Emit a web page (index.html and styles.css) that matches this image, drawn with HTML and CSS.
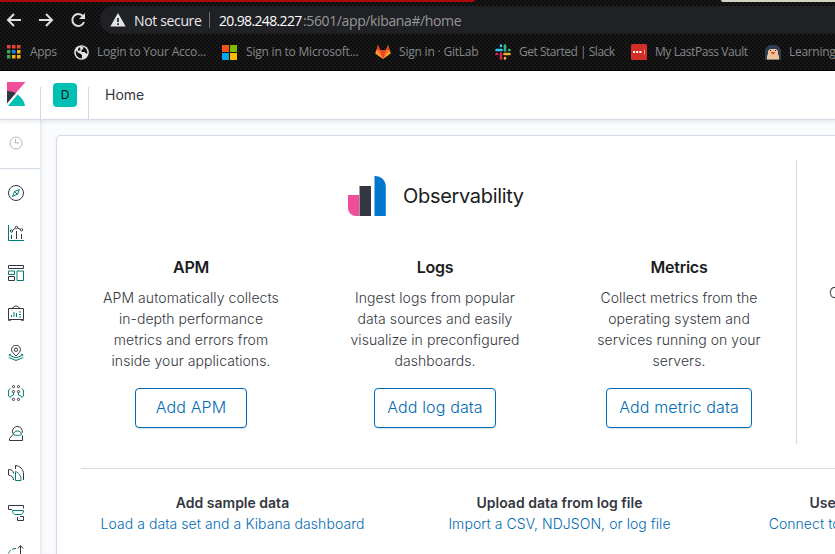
FILE: index.html
```html
<!DOCTYPE html>
<html lang="en">
<head>
<meta charset="utf-8">
<title>Home - Kibana</title>
<link rel="stylesheet" href="styles.css">
</head>
<body>
<div class="browser">
  <div class="tabs"><span class="tab-red"></span><span class="tab-light"></span></div>
  <div class="toolbar">
    <svg class="nav" width="16" height="16" viewBox="0 0 16 16"><path d="M15 8H2M8 2L2 8l6 6"/></svg>
    <svg class="nav" width="16" height="16" viewBox="0 0 16 16"><path d="M1 8h13M8 2l6 6-6 6"/></svg>
    <svg class="nav reload" width="16" height="16" viewBox="0 0 16 16"><path d="M13 4.2A6 6 0 1 0 14 10"/><path class="solid" d="M15 1v6H9z"/></svg>
    <div class="address">
      <svg width="16" height="14" viewBox="0 0 16 14"><path fill="#e3e4e5" d="M8 0l7.7 13.5H.3z"/><path stroke="#202124" stroke-width="1.7" d="M8 5v4M8 10.3V12"/></svg>
      <span class="secure">Not secure</span><i></i><span class="host">20.98.248.227</span><span class="path">:5601/app/kibana#/home</span>
    </div>
  </div>
  <div class="bookmarks">
    <div><svg width="14" height="14" viewBox="0 0 14 14"><path fill="#e84135" d="M0 0h3.5v3.5H0zM5 0h3.5v3.5H5zM10 0h3.5v3.5H10z"/><path fill="#39a853" d="M0 5h3.5v3.5H0zM0 10h3.5v3.5H0z"/><path fill="#1686f5" d="M5 5h3.5v3.5H5z"/><path fill="#f8b409" d="M10 5h3.5v3.5H10zM5 10h3.5v3.5H5zM10 10h3.5v3.5H10z"/></svg><span class="bm-apps">Apps</span></div>
    <div><svg width="15" height="15" viewBox="0 0 15 15"><circle cx="7.5" cy="7.5" r="7.3" fill="#e4e4e4"/><path fill="#141414" d="M2 5.5L4.5 8l2 .8L8 10v3.3C4 13.5 1 10 2 5.5zM6 2l3.6-.2L9 4 7.5 5v2h3l1.5 1.5h1.3c.3-2.5-.7-5-3-6.3L9.5 1.5zM6 2L4 4v2l2.5-1z"/></svg><span class="bm-login">Login to Your Acco...</span></div>
    <div><svg width="15" height="15" viewBox="0 0 15 15"><path fill="#f65314" d="M0 0h7v7H0z"/><path fill="#7fba00" d="M8 0h7v7H8z"/><path fill="#00a4ef" d="M0 8h7v7H0z"/><path fill="#ffb900" d="M8 8h7v7H8z"/></svg><span class="bm-ms">Sign in to Microsoft...</span></div>
    <div><svg width="16" height="16" viewBox="0 0 16 16"><path fill="#fc6d26" d="M3 1l2 5h6l2-5 2.5 8L8 15 .5 9z"/><path fill="#e24329" d="M5 6h6l-3 9zM3 1l2 5H1.5zM13 1l-2 5h3.5z"/><path fill="#fca326" d="M1.5 6L.3 9.5 8 15zM14.5 6l1.2 3.5L8 15z"/></svg><span class="bm-git">Sign in · GitLab</span></div>
    <div><svg class="slack" width="16" height="16" viewBox="0 0 16 16"><path stroke="#36c5f0" d="M1.5 6h5M6 1.5v.4"/><path stroke="#2eb67d" d="M10 1.5v5M14.1 6h.4"/><path stroke="#ecb22e" d="M9.5 10h5M10 14.1v.4"/><path stroke="#e01e5a" d="M6 9.5v5M1.5 10h.4"/></svg><span class="bm-slack">Get Started | Slack</span></div>
    <div><svg width="16" height="16" viewBox="0 0 16 16"><rect width="16" height="16" rx="1.5" fill="#d32d27"/><path fill="#fff" d="M2 7h2v2H2zM5.2 7h2v2h-2zM8.4 7h2v2h-2z"/><path fill="#f09a94" d="M13 5.5h1v5h-1z"/></svg><span class="bm-last">My LastPass Vault</span></div>
    <div><svg width="16" height="16" viewBox="0 0 16 16"><path fill="#2c3e50" d="M0 16V7c0-2 1-3 3-5l2-1h6l2 1c2 2 3 3 3 5v9z"/><path fill="#efc49b" d="M3 7l2-2h6l2 2v3l1 2v3.5H2V12l1-2z"/><path fill="#27303a" d="M5 6h1v1H5zM10 6h1v1h-1z"/><path fill="#d95827" d="M6 8h4v1L8 10.5 6 9z"/></svg><span class="bm-learn">Learning</span></div>
  </div>
</div>
<header class="header">
  <div class="logo"><svg width="19" height="24" viewBox="0 0 19 24"><path fill="#f04e98" d="M0 0h18.5L0 21z"/><path fill="#343741" d="M0 9c3.3 0 6.3.8 8.8 2L0 21.5z"/><path fill="#00bfb3" d="M10.5 12.6c4 2.7 6.8 6.7 7.6 11.4H1z"/></svg></div>
  <div class="space"><span>D</span></div>
  <div class="crumb">Home</div>
</header>
<div class="app">
  <nav class="side">
    <div class="recent"><svg width="14" height="14" viewBox="0 0 14 14" fill="none" stroke="#b7b9be"><circle cx="7" cy="7" r="6"/><path d="M6.5 3v4H10"/></svg></div>
    <div class="items">
      <svg viewBox="0 0 16 16"><circle cx="8" cy="8" r="7.5"/><path class="g" d="M11.5 4.5L9.5 9l-5 2.5 2-5zM6.5 6.5l3 3"/></svg>
      <svg viewBox="0 0 16 16"><path class="g" d="M.5 0v15.5H16"/><path d="M3.5 10v4M8.5 6v8M13.5 9v5M4.6 5.3L7.2 3.2M9.8 3l2.4 1.3"/><circle cx="3.5" cy="6" r="1.2"/><circle cx="8.5" cy="2.5" r="1.2"/><circle cx="13.5" cy="4.8" r="1.2"/></svg>
      <svg viewBox="0 0 16 16"><path d="M.5.5h15v3H.5zM.5 11.5h6v4h-6z"/><path class="g" d="M.5 6h6v3.5h-6zM9 6h6.5v9.5H9z"/></svg>
      <svg viewBox="0 0 16 16"><path d="M.5 3.5h15v11H.5zM4 3.5L7 1h2l3 2.5M0 15.2h3M13 15.2h3"/><path class="g" d="M3.5 10v2M6 7v5M8.5 8v4M11 7h2M11 9.5h2M11 12h2"/></svg>
      <svg viewBox="0 0 16 16"><path d="M8 11C5.5 8.4 3.5 6.5 3.5 4.7a4.5 4.5 0 0 1 9 0C12.5 6.5 10.5 8.4 8 11z"/><circle cx="8" cy="4.7" r="1.7"/><path class="g" d="M3 9L.8 10 8 13l7.2-3L13 9M.8 12.5l7.2 3 7.2-3"/></svg>
      <svg viewBox="0 0 16 16"><g><circle cx="5.5" cy="1.6" r="1.1"/><circle cx="10.5" cy="1.6" r="1.1"/><circle cx="5.5" cy="6.6" r="1.1"/><circle cx="10.5" cy="6.6" r="1.1"/><circle cx="5.5" cy="14.4" r="1.1"/><circle cx="10.5" cy="14.4" r="1.1"/></g><path class="g" d="M2.5 3.5L.6 5v6l2 2M5.5 8v2l-3 1.5M13.5 3.5L15.4 5v6l-2 2M10.5 8v2l3 1.5"/></svg>
      <svg viewBox="0 0 16 16"><path d="M4.8 8.5a5 5 0 1 1 9.4-.7M5 9.5l-3.5 4v2h13v-5"/><path class="g" d="M5.5 9.5c0-2 1.5-3.5 4-3.5s4 1.5 4 3.5c-2 1.2-6 1.2-8 0z"/></svg>
      <svg viewBox="0 0 16 16"><path d="M5.5 15C5.5 12.5 4 10.6.5 10V4.5c3 0 5 1.3 5 4M7.5 4V.5C12 1 15.5 4.3 15.5 9v6"/><path class="g" d="M7.5 6.5c3.5 1.2 5.5 4 5.5 9H7.5z"/></svg>
      <svg viewBox="0 0 16 16"><path d="M4 4.5H.5v-4h15v3M9.5 12v3.5h6v-4H12"/><path class="g" d="M4.5 5.5h11c0 3-1.5 4-3.5 4H8c-2 0-3.5-1-3.5-4z"/></svg>
      <svg viewBox="0 0 16 16"><path d="M12.5 16V1M9.8 3.5l2.7-3 2.7 3M8 13h1"/><path class="g" stroke-dasharray="4 1.5" d="M8 3.5C4 3.5.5 6 .5 10"/></svg>
    </div>
  </nav>
  <main>
    <section class="panel">
      <div class="solutions">
        <div class="observability">
          <div class="title"><svg width="38" height="40" viewBox="0 0 38 40"><path fill="#f04e98" d="M0 19h11v21H8a8 8 0 0 1-8-8z"/><path fill="#343741" d="M11.5 10H23v30H11.5z"/><path fill="#0077cc" d="M26.5 0c7 0 11.3 4.5 11.3 11v29H26.5z"/></svg><h2>Observability</h2></div>
          <div class="cards">
            <article><h3>APM</h3><p>APM automatically collects<br>in-depth performance<br>metrics and errors from<br>inside your applications.</p><button>Add APM</button></article>
            <article><h3>Logs</h3><p>Ingest logs from popular<br>data sources and easily<br>visualize in preconfigured<br>dashboards.</p><button>Add log data</button></article>
            <article><h3>Metrics</h3><p>Collect metrics from the<br>operating system and<br>services running on your<br>servers.</p><button>Add metric data</button></article>
          </div>
        </div>
        <div class="security"><p>Centralize security events</p></div>
      </div>
      <div class="data">
        <div><b>Add sample data</b><a>Load a data set and a Kibana dashboard</a></div>
        <div><b>Upload data from log file</b><a>Import a CSV, NDJSON, or log file</a></div>
        <div><b>Use Elasticsearch data</b><a>Connect to your Elasticsearch index</a></div>
      </div>
    </section>
  </main>
</div>
</body>
</html>
```
FILE: styles.css
```css
* { box-sizing: border-box; }
body { margin: 0; width: 835px; height: 554px; overflow: hidden; display: flex; flex-direction: column; background: #fff; font-family: Inter, "Liberation Sans", sans-serif; color: #343741; }
svg { flex: none; display: block; }
h2, h3, p { margin: 0; }

.browser { height: 71px; flex: none; overflow: hidden; border-bottom: 1px solid #000; background: repeating-conic-gradient(#0c0c0c 0 25%, #191919 0 50%) 0 0 / 4px 4px; font-family: "Open Sans", "Noto Sans", sans-serif; }
.tabs { height: 2px; display: flex; justify-content: space-between; }
.tab-red { width: 475px; background: #ad0909; border-radius: 0 0 4px 0; }
.tab-light { width: 114px; background: #d3d2c2; border-radius: 0 0 0 4px; }
.toolbar { display: flex; align-items: center; padding-left: 6px; height: 36px; }
.nav { fill: none; stroke: #dedfe0; stroke-width: 2; margin-right: 16px; }
.nav .solid { fill: #dedfe0; stroke: none; }
.reload { margin-right: 14px; }
.address { width: 760px; flex: none; height: 28px; border-radius: 14px; background: #202124; display: flex; align-items: center; padding-left: 10px; font-size: 14px; white-space: nowrap; }
.secure { color: #e8eaed; margin-left: 8px; width: 67px; letter-spacing: -.35px; }
.address i { width: 1px; height: 16px; background: #6b6d70; margin: 0 9px 0 8px; }
.host { color: #fff; width: 84px; letter-spacing: -.65px; }
.path { color: #969799; letter-spacing: -.38px; }
.bookmarks { display: grid; grid-template-columns: 67px 148px 153px 120px 136px 134px 140px; padding-left: 7px; height: 28px; font-size: 12px; color: #85878a; white-space: nowrap; }
.bookmarks div { display: flex; align-items: center; gap: 8px; }
.bookmarks span { letter-spacing: -.2px; margin-top: -1px; }
.bookmarks .bm-apps { margin-left: 1px; letter-spacing: -.3px; }
.bookmarks .bm-ms { margin-left: 1px; }
.bookmarks .bm-slack { letter-spacing: -.48px; }
.bookmarks .bm-last { letter-spacing: -.42px; }
.bookmarks .bm-learn { letter-spacing: -.3px; }
.slack { fill: none; stroke-width: 2.6; stroke-linecap: round; }

.header { position: relative; height: 49px; flex: none; display: flex; border-bottom: 1px solid #d3dae6; box-shadow: 0 2px 3px rgba(130,140,165,.16); z-index: 1; }
.logo { width: 40px; padding: 11px 0 0 7px; }
.space { width: 49px; padding: 12px 12px; border: solid #d3dae6; border-width: 0 1px; border-image: linear-gradient(transparent 16px, #d3dae6 16px) 1; }
.space span { display: block; height: 24px; width: 24px; border-radius: 4px; background: #00bfb3; color: #111; font-size: 12px; line-height: 24px; text-align: center; }
.crumb { padding-left: 16px; font-size: 14px; line-height: 48px; }

.app { display: flex; height: 434px; }
.side { width: 40px; flex: none; }
.recent { height: 49px; border-bottom: 1px solid #d3dae6; padding: 16px 0 0 9px; }
.items { display: flex; flex-direction: column; gap: 24px; padding: 16px 0 0 8px; }
.items svg { width: 16px; height: 16px; fill: none; stroke: #343741; }
.items .g { stroke: #017d73; }
main { flex: none; width: 795px; padding: 15px 0 0 15px; border-left: 1px solid #e6ebf2; background: #fafbfd; box-shadow: inset 2px 0 2px #f0f3f8; overflow: hidden; }
.panel { width: 1040px; height: 480px; background: #fff; border: 1px solid #d3dae6; border-radius: 4px; padding: 24px; box-shadow: 0 2px 3px rgba(130,140,165,.15); }
.solutions { display: flex; height: 284px; }
.observability { width: 716px; flex: none; border-right: 1px solid #d3dae6; }
.title { display: flex; align-items: center; gap: 17px; height: 40px; margin: 16px 0 0 267px; }
h2 { font-size: 20px; font-weight: 400; letter-spacing: -.32px; color: #1a1c21; line-height: 24px; white-space: nowrap; }
.cards { display: grid; grid-template-columns: repeat(3, 220px); gap: 24px; margin-top: 39px; }
article { text-align: center; }
h3 { font-size: 16px; font-weight: 600; letter-spacing: -.25px; line-height: 24px; color: #1a1c21; }
article p, .security p { font-size: 14px; font-weight: 300; letter-spacing: .06px; line-height: 21px; margin-top: 8px; white-space: nowrap; }
button { min-width: 112px; height: 40px; margin-top: 17px; padding: 0 12px 2px; border: 1px solid #006bb4; border-radius: 4px; background: #fff; color: #006bb4; font: 300 16px Inter, sans-serif; letter-spacing: .14px; box-shadow: 0 2px 2px -1px rgba(54,97,126,.2); }
.security { padding: 122px 0 0 32px; }
.security p { margin: 0; }
.data { display: grid; grid-template-columns: repeat(3, 303px); gap: 24px; margin-top: 24px; padding-top: 23px; border-top: 1px solid #d3dae6; width: 990px; font-size: 14px; line-height: 21px; text-align: center; white-space: nowrap; }
.data b { display: block; font-weight: 600; }
.data a { color: #006bb4; font-weight: 300; letter-spacing: .07px; }
```
